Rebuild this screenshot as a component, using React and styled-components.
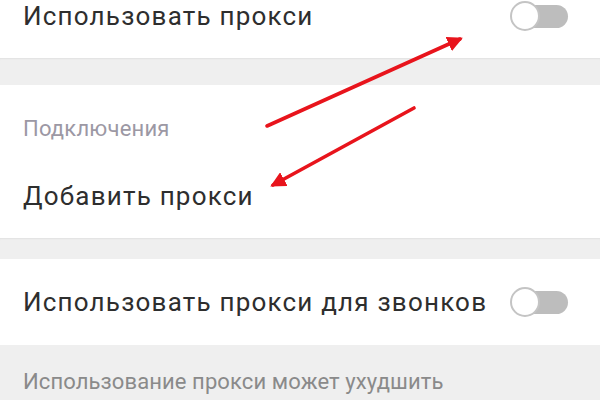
import React from "react";
import styled, { createGlobalStyle } from "styled-components";

const GlobalStyle = createGlobalStyle`
  html, body {
    margin: 0;
    padding: 0;
    background: #efefef;
    font-family: Roboto, "Noto Sans", "Liberation Sans", sans-serif;
  }
`;

const Page = styled.div`
  position: relative;
  width: 600px;
  height: 400px;
  overflow: hidden;
  background: #efefef;
`;

const Card = styled.div`
  background: #ffffff;
  display: flex;
  flex-direction: column;
`;

const Gap = styled.div`
  height: ${(p) => p.h}px;
  background: #efefef;
  box-shadow: inset 0 2px 2px -1px rgba(0, 0, 0, 0.06);
`;

const Row = styled.div`
  display: flex;
  align-items: center;
  justify-content: space-between;
  height: ${(p) => p.h}px;
  padding: 0 32px 0 23px;
  box-sizing: border-box;
  ${(p) => (p.top ? `align-items: flex-start; padding-top: ${p.top}px;` : "")}
`;

const Label = styled.span`
  font-size: 26px;
  color: #2e2e2e;
  letter-spacing: 1.2px;
  white-space: nowrap;
`;

const SectionTitle = styled.div`
  height: ${(p) => p.h}px;
  display: flex;
  align-items: flex-end;
  padding-left: 23px;
  font-size: 22px;
  letter-spacing: 0.2px;
  color: #9c98a4;
`;

const Footer = styled.div`
  padding: 24px 23px 0;
  font-size: 22px;
  letter-spacing: 0.1px;
  color: #8a8a8a;
  white-space: nowrap;
`;

const Track = styled.div`
  position: relative;
  width: 58px;
  height: 30px;
  flex: none;
  &::before {
    content: "";
    position: absolute;
    left: 14px;
    right: 0;
    top: 4px;
    height: 23px;
    border-radius: 12px;
    background: #bdbdbd;
  }
  &::after {
    content: "";
    position: absolute;
    left: 0;
    top: 0;
    width: 26px;
    height: 26px;
    border-radius: 50%;
    background: #ffffff;
    border: 2.5px solid #c4c4c4;
  }
`;

const Arrows = styled.svg`
  position: absolute;
  left: 0;
  top: 0;
  pointer-events: none;
`;

export default function App() {
  return (
    <Page>
      <GlobalStyle />
      <Card>
        <Row h={58} top={1}>
          <Label>Использовать прокси</Label>
          <Track />
        </Row>
      </Card>
      <Gap h={27} />
      <Card>
        <SectionTitle h={56}>Подключения</SectionTitle>
        <Row h={97} top={40}>
          <Label>Добавить прокси</Label>
        </Row>
      </Card>
      <Gap h={21} />
      <Card>
        <Row h={86}>
          <Label>Использовать прокси для звонков</Label>
          <Track />
        </Row>
      </Card>
      <Gap h={0} />
      <Footer>Использование прокси может ухудшить</Footer>
      <Arrows width="600" height="400" viewBox="0 0 600 400">
        <defs>
          <marker id="head" viewBox="0 0 10 10" refX="8" refY="5" markerWidth="4.3" markerHeight="4.3" orient="auto">
            <path d="M0 0 L10 5 L0 10 Z" fill="#e8141c" />
          </marker>
        </defs>
        <line x1="267" y1="126" x2="460" y2="39" stroke="#e8141c" strokeWidth="3.6" strokeLinecap="round" markerEnd="url(#head)" />
        <line x1="414" y1="108" x2="273" y2="185" stroke="#e8141c" strokeWidth="3.6" strokeLinecap="round" markerEnd="url(#head)" />
      </Arrows>
    </Page>
  );
}
